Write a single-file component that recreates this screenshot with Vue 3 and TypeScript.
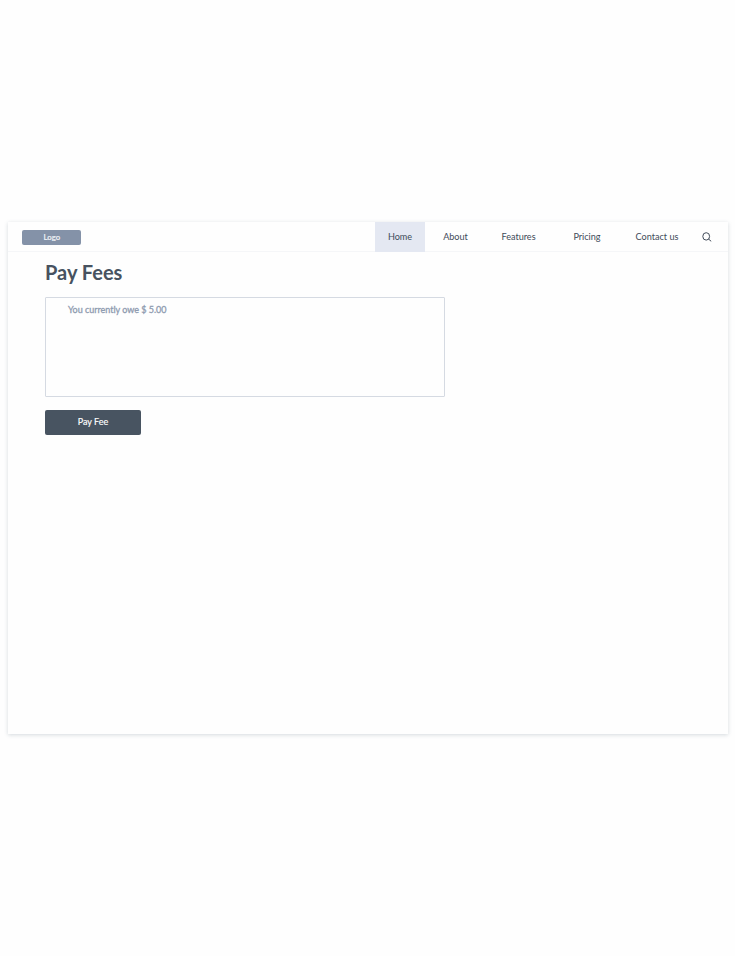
<script setup lang="ts">
interface NavItem {
  label: string
  key: string
}

const items: NavItem[] = [
  { label: 'Home', key: 'home' },
  { label: 'About', key: 'about' },
  { label: 'Features', key: 'features' },
  { label: 'Pricing', key: 'pricing' },
  { label: 'Contact us', key: 'contact' },
]
const active = 'home'
</script>

<template>
  <div class="page">
    <div class="window">
      <header class="bar">
        <div class="logo">Logo</div>
        <nav class="nav">
          <a v-for="item in items" :key="item.key" class="item" :class="[item.key, { active: item.key === active }]">{{ item.label }}</a>
        </nav>
        <svg class="search" viewBox="0 0 10 10" fill="none" stroke="#414b59" stroke-width="1">
          <ellipse cx="4.2" cy="4.4" rx="3.4" ry="3.7" />
          <path d="M6.5 7L9.2 9.3" />
        </svg>
      </header>
      <main class="content">
        <h1 class="title">Pay Fees</h1>
        <section class="owed">You currently owe $ 5.00</section>
        <button class="pay" type="button">Pay Fee</button>
      </main>
    </div>
  </div>
</template>

<style>
body {
  background: #fefefe;
}
</style>

<style scoped>
.page {
  box-sizing: border-box;
  height: 956px;
  padding: 222px 7px 0 8px;
  font-family: Lato, sans-serif;
  color: #414b59;
}
.window {
  height: 512px;
  background: #fefefe;
  box-shadow: 0 1px 4px rgba(70, 90, 110, 0.22);
}
.bar {
  box-sizing: border-box;
  display: flex;
  align-items: center;
  height: 30px;
  padding: 0 16px 0 14.4px;
  border-bottom: 1px solid #f5f6f8;
}
.logo {
  width: 59px;
  height: 15px;
  margin-top: 1px;
  border-radius: 2px;
  background: #8492a8;
  color: #f1f4f8;
  -webkit-text-stroke: 0.2px #f1f4f8;
  font-size: 7.8px;
  line-height: 14px;
  text-align: center;
}
.nav {
  display: flex;
  margin-left: auto;
  height: 30px;
  align-self: flex-start;
}
.item {
  box-sizing: border-box;
  display: flex;
  align-items: center;
  justify-content: center;
  height: 30px;
  padding-bottom: 2px;
  font-size: 9.1px;
}
.home {
  width: 50px;
}
.about {
  width: 61px;
}
.features {
  width: 65px;
}
.pricing {
  width: 72px;
}
.contact {
  width: 68px;
}
.active {
  background: #e4e8f2;
}
.search {
  width: 10px;
  height: 10px;
  margin-left: 11px;
}
.content {
  display: flex;
  flex-direction: column;
  align-items: flex-start;
  padding: 8px 37px 0;
}
.title {
  margin: 0;
  font-size: 20px;
  line-height: 24px;
  font-weight: 700;
  color: #475260;
}
.owed {
  box-sizing: border-box;
  width: 400px;
  height: 100px;
  margin-top: 13px;
  padding: 6px 22px;
  border: 1px solid #d5dae2;
  border-radius: 1px;
  color: #8e9bb0;
  -webkit-text-stroke: 0.3px #8e9bb0;
  font-size: 9px;
  line-height: 12px;
  letter-spacing: -0.02px;
}
.pay {
  width: 96px;
  height: 25px;
  margin-top: 13px;
  padding: 0 0 2px;
  border: 0;
  border-radius: 2px;
  background: #485461;
  color: #fff;
  font-family: inherit;
  font-size: 9px;
  -webkit-text-stroke: 0.15px #fff;
}
</style>
